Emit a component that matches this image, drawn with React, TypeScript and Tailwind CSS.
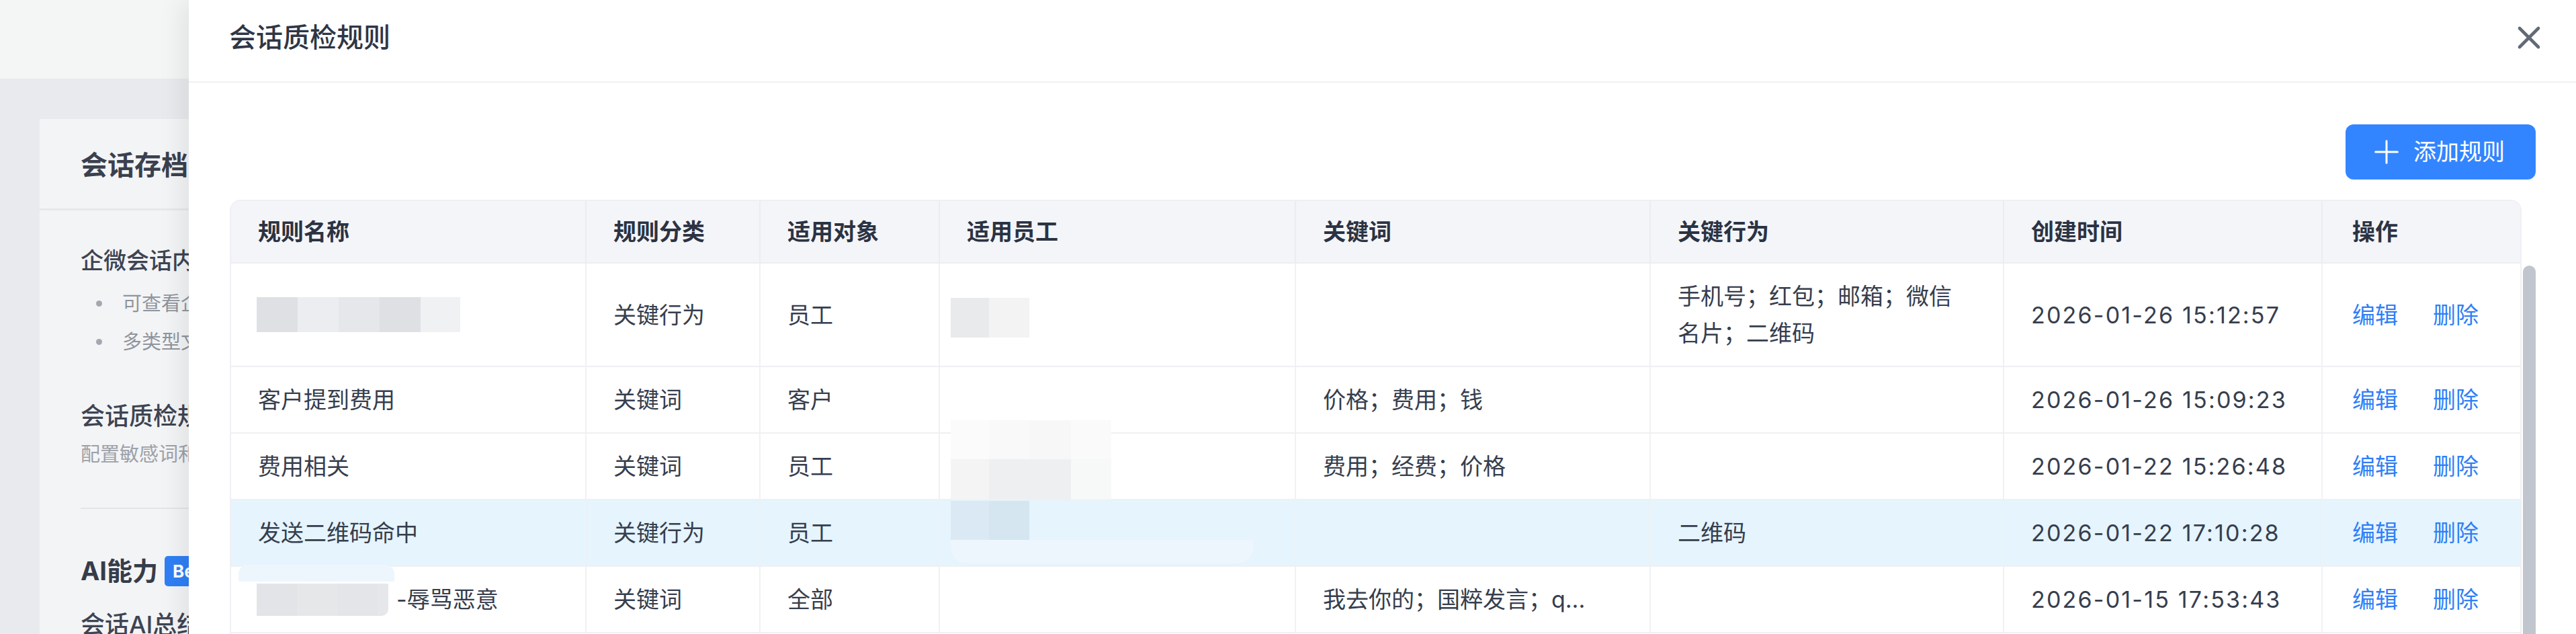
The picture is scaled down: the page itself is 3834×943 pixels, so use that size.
import React from "react";
import { X, Plus } from "lucide-react";

type Cell = [number, string];

function Mosaic({ cells, h, className = "" }: { cells: Cell[]; h: number; className?: string }) {
  return (
    <div className={"flex " + className}>
      {cells.map(([w, c], i) => (
        <div key={i} style={{ width: w, height: h, background: c }} />
      ))}
    </div>
  );
}

const gridCols =
  "grid grid-cols-[529px_259px_267px_530px_528px_526px_474px_294px]";

type Row = {
  name: React.ReactNode;
  cat: string;
  target: string;
  keywords: string;
  behavior: React.ReactNode;
  time: string;
  hl?: boolean;
};

const rows: Row[] = [
  {
    name: (
      <Mosaic
        h={52}
        className="-ml-[2px]"
        cells={[
          [61, "#dfe0e4"],
          [61, "#ecedf0"],
          [61, "#e6e7ea"],
          [61, "#dfe0e4"],
          [59, "#f0f1f3"],
        ]}
      />
    ),
    cat: "关键行为",
    target: "员工",
    keywords: "",
    behavior: (
      <span>
        手机号；红包；邮箱；微信
        <br />
        名片；二维码
      </span>
    ),
    time: "2026-01-26 15:12:57",
  },
  {
    name: "客户提到费用",
    cat: "关键词",
    target: "客户",
    keywords: "价格；费用；钱",
    behavior: "",
    time: "2026-01-26 15:09:23",
  },
  {
    name: "费用相关",
    cat: "关键词",
    target: "员工",
    keywords: "费用；经费；价格",
    behavior: "",
    time: "2026-01-22 15:26:48",
  },
  {
    name: "发送二维码命中",
    cat: "关键行为",
    target: "员工",
    keywords: "",
    behavior: "二维码",
    time: "2026-01-22 17:10:28",
    hl: true,
  },
  {
    name: (
      <span className="flex items-center">
        <Mosaic
          h={48}
          className="-ml-[2px] rounded-br-[10px] overflow-hidden"
          cells={[
            [60, "#e3e4e7"],
            [60, "#e6e7e9"],
            [60, "#e4e5e8"],
            [16, "#e6e7ea"],
          ]}
        />
        <span className="ml-[12px]">-辱骂恶意</span>
      </span>
    ),
    cat: "关键词",
    target: "全部",
    keywords: "我去你的；国粹发言；q...",
    behavior: "",
    time: "2026-01-15 17:53:43",
  },
];

const headers = ["规则名称", "规则分类", "适用对象", "适用员工", "关键词", "关键行为", "创建时间", "操作"];

function LeftPage() {
  return (
    <div className="flex h-[943px] flex-col bg-[#e9eaed]">
      <div className="h-[117px] shrink-0 bg-[#f4f5f5]" />
      <div className="pl-[59px] pt-[60px]">
        <div className="w-[1500px] h-[900px] bg-[#f3f4f5]">
          <div className="flex h-[136px] items-center border-b-[3px] border-[#e6e8eb] px-[61px] pt-[4px]">
            <span className="text-[40px] font-bold leading-[50px] text-[#3a404e]">会话存档</span>
          </div>
          <div className="px-[61px] pt-[50px]">
            <div className="text-[34px] font-medium leading-[50px] text-[#3d4453]">企微会话内容存档</div>
            <ul className="mt-[10px] pl-[23px] text-[29px] leading-[57px] text-[#8f959e]">
              <li className="flex items-center">
                <span className="mr-[30px] h-[9px] w-[9px] rounded-full bg-[#a3a8b0]" />
                可查看企业成员与客户的会话记录
              </li>
              <li className="flex items-center">
                <span className="mr-[30px] h-[9px] w-[9px] rounded-full bg-[#a3a8b0]" />
                多类型文件消息均可存档
              </li>
            </ul>
            <div className="mt-[57px] text-[36px] font-medium leading-[50px] text-[#3d4453]">会话质检规则</div>
            <div className="mt-[10px] text-[29px] leading-[44px] text-[#9ca1a9]">配置敏感词和关键行为规则</div>
            <div className="mt-[57px] h-[2px] bg-[#e3e5e8]" />
            <div className="mt-[64px] flex h-[56px] items-center">
              <span className="text-[38px] font-bold leading-[56px] text-[#363c4a]">AI能力</span>
              <span className="ml-[10px] flex h-[45px] items-center rounded-[5px] bg-[#2f7ff5] px-[12px] text-[26px] font-bold text-white">
                Beta
              </span>
            </div>
            <div className="mt-[27px] text-[36px] font-medium leading-[50px] text-[#3d4453]">会话AI总结</div>
          </div>
        </div>
      </div>
    </div>
  );
}

function Drawer() {
  return (
    <div className="absolute bottom-0 left-[281px] right-0 top-0 flex flex-col overflow-hidden bg-white shadow-[-10px_0_36px_rgba(0,0,0,0.08)]">
      <div className="flex h-[123px] shrink-0 items-center justify-between border-b-2 border-[#eef0f2] pb-[10px] pl-[60px] pr-[42px]">
        <div className="text-[40px] font-medium leading-[50px] text-[#2f3646]">会话质检规则</div>
        <X size={56} strokeWidth={2} className="text-[#626a77]" />
      </div>
      <div className="flex flex-1 flex-col pl-[61px] pr-[60px] pt-[62px]">
        <div className="mb-[30px] flex justify-end">
          <button className="flex h-[82px] w-[283px] items-center gap-[12px] rounded-[12px] bg-[#3385ff] pl-[33px] text-[34px] leading-[50px] text-white">
            <Plus size={56} strokeWidth={1.3} />
            <span>添加规则</span>
          </button>
        </div>
        <div className="flex">
          <div className="relative w-[3411px] overflow-hidden rounded-t-[16px] border-2 border-[#eef0f3]">
            <div className={gridCols + " h-[93px] border-b-2 border-[#eceef2] bg-[#f4f5f8]"}>
              {headers.map((h, i) => (
                <div
                  key={h}
                  className={
                    "flex items-center text-[34px] font-semibold text-[#2b3343] " +
                    (i === 7 ? "pl-[44px]" : "border-r-2 border-[#eaecf0] pl-[40px]")
                  }
                >
                  {h}
                </div>
              ))}
            </div>
            {rows.map((r, idx) => (
              <div
                key={idx}
                className={
                  gridCols +
                  " border-b-2 border-[#eef0f3] text-[34px] leading-[55px] text-[#363e4e] " +
                  (r.hl ? "bg-[#e5f4fd]" : "bg-white")
                }
              >
                <div className="flex items-center border-r-2 border-[#f0f1f3] py-[21px] pl-[40px]">{r.name}</div>
                <div className="flex items-center border-r-2 border-[#f0f1f3] py-[21px] pl-[40px]">{r.cat}</div>
                <div className="flex items-center border-r-2 border-[#f0f1f3] py-[21px] pl-[40px]">{r.target}</div>
                <div className="flex items-center border-r-2 border-[#f0f1f3] py-[21px] pl-[40px]" />
                <div className="flex items-center border-r-2 border-[#f0f1f3] py-[21px] pl-[40px]">{r.keywords}</div>
                <div className="flex items-center border-r-2 border-[#f0f1f3] py-[21px] pl-[40px]">{r.behavior}</div>
                <div className="flex items-center border-r-2 border-[#f0f1f3] py-[21px] pl-[40px] tracking-[2.2px]">{r.time}</div>
                <div className="flex items-center gap-[52px] py-[21px] pl-[44px] text-[#2f7ff7]">
                  <span>编辑</span>
                  <span>删除</span>
                </div>
              </div>
            ))}
            {/* privacy mosaics over the staff column */}
            <div className="absolute left-[1071px] top-[144px]">
              <Mosaic h={59} cells={[[57, "#e9eaec"], [60, "#f3f3f4"]]} />
            </div>
            <div className="absolute left-[1071px] top-[326px]">
              <Mosaic h={58} cells={[[57, "#fbfbfb"], [60, "#f9f9f9"], [62, "#f7f7f7"], [60, "#fafafa"]]} />
              <Mosaic h={60} cells={[[57, "#f4f4f5"], [60, "#eeeff1"], [62, "#eeeff1"], [60, "#f7f8f8"]]} />
            </div>
            <div className="absolute left-[1071px] top-[446px]">
              <Mosaic h={58} cells={[[57, "#dae9f3"], [60, "#d5e6f1"]]} />
              <div className="h-[35px] w-[450px] rounded-b-[24px] bg-[#eef6fd]" />
            </div>
            <div className="absolute left-[11px] top-[541px] h-[25px] w-[232px] rounded-t-[14px] bg-[#edf6fd]" />
          </div>
          <div className="w-[21px] pl-[2px] pt-[98px]">
            <div className="h-[700px] w-[19px] rounded-full bg-[#c1c5cd]" />
          </div>
        </div>
      </div>
    </div>
  );
}

export default function App() {
  return (
    <div className="relative h-[943px] w-[3834px] overflow-hidden font-['Inter','Noto_Sans_CJK_SC',sans-serif]">
      <LeftPage />
      <Drawer />
    </div>
  );
}
